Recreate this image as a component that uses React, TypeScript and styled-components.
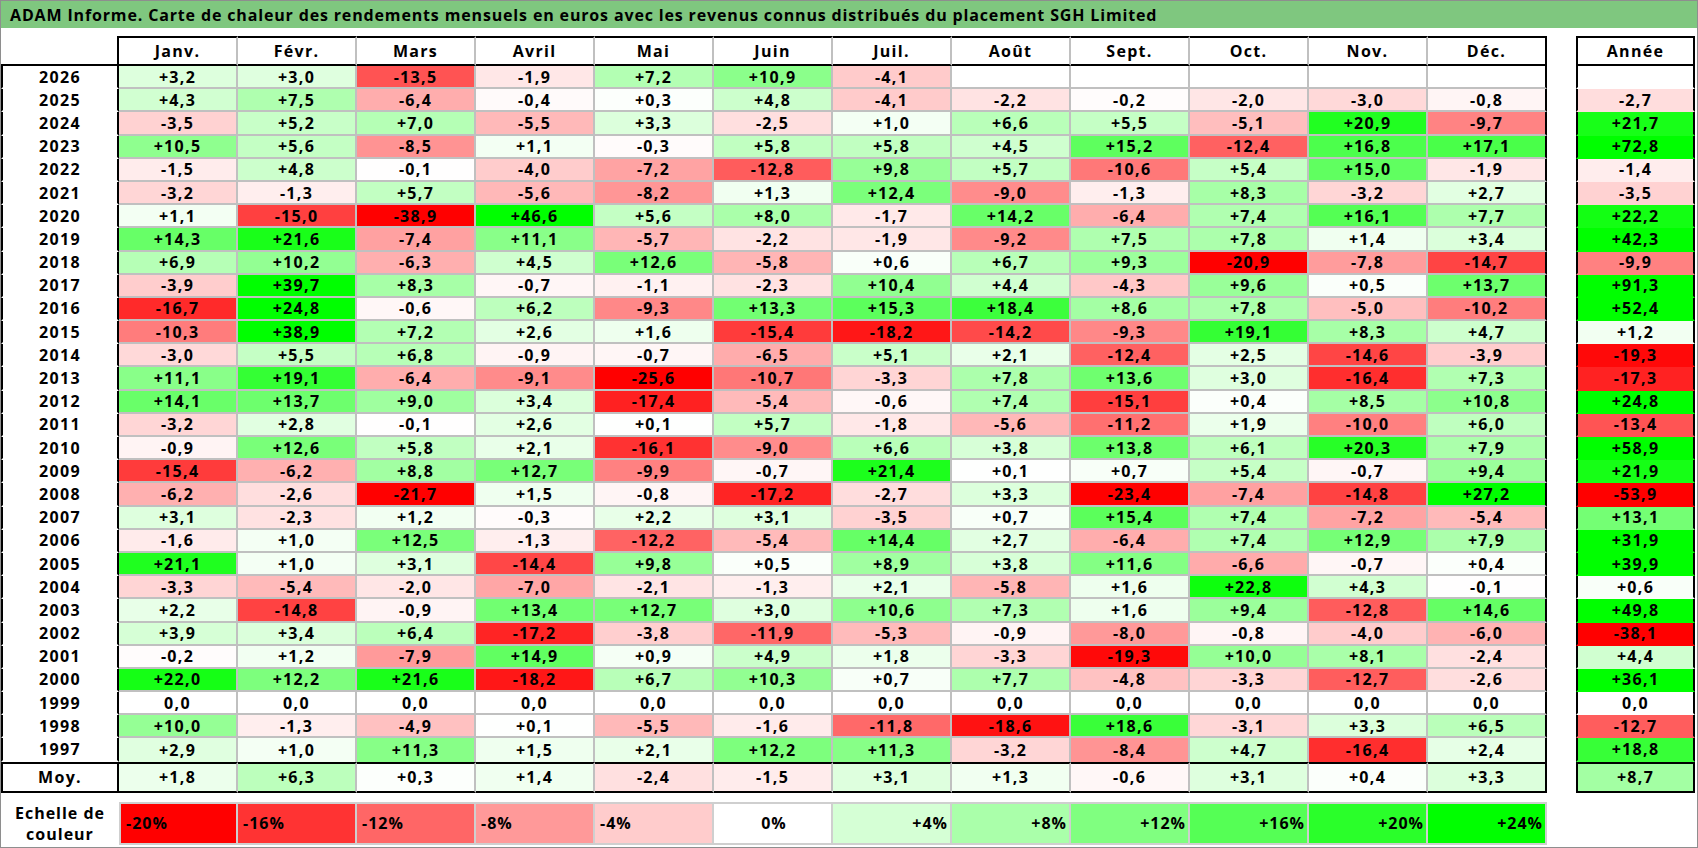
import styled, { createGlobalStyle } from 'styled-components';

const GlobalStyle = createGlobalStyle`
  html, body {
    margin: 0;
    padding: 0;
    background: #fff;
  }
  body {
    font-family: 'Open Sans', 'Liberation Sans', sans-serif;
    color: #000;
  }
`;

const GRID_GREY = '#c0c0c0';

const MONTHS = ['Janv.', 'Févr.', 'Mars', 'Avril', 'Mai', 'Juin', 'Juil.', 'Août', 'Sept.', 'Oct.', 'Nov.', 'Déc.'];

// year, 12 months, year total ('_' = no value yet)
const RAW: [string, string][] = [
  ['2026', '3.2 3.0 -13.5 -1.9 7.2 10.9 -4.1 _ _ _ _ _ _'],
  ['2025', '4.3 7.5 -6.4 -0.4 0.3 4.8 -4.1 -2.2 -0.2 -2.0 -3.0 -0.8 -2.7'],
  ['2024', '-3.5 5.2 7.0 -5.5 3.3 -2.5 1.0 6.6 5.5 -5.1 20.9 -9.7 21.7'],
  ['2023', '10.5 5.6 -8.5 1.1 -0.3 5.8 5.8 4.5 15.2 -12.4 16.8 17.1 72.8'],
  ['2022', '-1.5 4.8 -0.1 -4.0 -7.2 -12.8 9.8 5.7 -10.6 5.4 15.0 -1.9 -1.4'],
  ['2021', '-3.2 -1.3 5.7 -5.6 -8.2 1.3 12.4 -9.0 -1.3 8.3 -3.2 2.7 -3.5'],
  ['2020', '1.1 -15.0 -38.9 46.6 5.6 8.0 -1.7 14.2 -6.4 7.4 16.1 7.7 22.2'],
  ['2019', '14.3 21.6 -7.4 11.1 -5.7 -2.2 -1.9 -9.2 7.5 7.8 1.4 3.4 42.3'],
  ['2018', '6.9 10.2 -6.3 4.5 12.6 -5.8 0.6 6.7 9.3 -20.9 -7.8 -14.7 -9.9'],
  ['2017', '-3.9 39.7 8.3 -0.7 -1.1 -2.3 10.4 4.4 -4.3 9.6 0.5 13.7 91.3'],
  ['2016', '-16.7 24.8 -0.6 6.2 -9.3 13.3 15.3 18.4 8.6 7.8 -5.0 -10.2 52.4'],
  ['2015', '-10.3 38.9 7.2 2.6 1.6 -15.4 -18.2 -14.2 -9.3 19.1 8.3 4.7 1.2'],
  ['2014', '-3.0 5.5 6.8 -0.9 -0.7 -6.5 5.1 2.1 -12.4 2.5 -14.6 -3.9 -19.3'],
  ['2013', '11.1 19.1 -6.4 -9.1 -25.6 -10.7 -3.3 7.8 13.6 3.0 -16.4 7.3 -17.3'],
  ['2012', '14.1 13.7 9.0 3.4 -17.4 -5.4 -0.6 7.4 -15.1 0.4 8.5 10.8 24.8'],
  ['2011', '-3.2 2.8 -0.1 2.6 0.1 5.7 -1.8 -5.6 -11.2 1.9 -10.0 6.0 -13.4'],
  ['2010', '-0.9 12.6 5.8 2.1 -16.1 -9.0 6.6 3.8 13.8 6.1 20.3 7.9 58.9'],
  ['2009', '-15.4 -6.2 8.8 12.7 -9.9 -0.7 21.4 0.1 0.7 5.4 -0.7 9.4 21.9'],
  ['2008', '-6.2 -2.6 -21.7 1.5 -0.8 -17.2 -2.7 3.3 -23.4 -7.4 -14.8 27.2 -53.9'],
  ['2007', '3.1 -2.3 1.2 -0.3 2.2 3.1 -3.5 0.7 15.4 7.4 -7.2 -5.4 13.1'],
  ['2006', '-1.6 1.0 12.5 -1.3 -12.2 -5.4 14.4 2.7 -6.4 7.4 12.9 7.9 31.9'],
  ['2005', '21.1 1.0 3.1 -14.4 9.8 0.5 8.9 3.8 11.6 -6.6 -0.7 0.4 39.9'],
  ['2004', '-3.3 -5.4 -2.0 -7.0 -2.1 -1.3 2.1 -5.8 1.6 22.8 4.3 -0.1 0.6'],
  ['2003', '2.2 -14.8 -0.9 13.4 12.7 3.0 10.6 7.3 1.6 9.4 -12.8 14.6 49.8'],
  ['2002', '3.9 3.4 6.4 -17.2 -3.8 -11.9 -5.3 -0.9 -8.0 -0.8 -4.0 -6.0 -38.1'],
  ['2001', '-0.2 1.2 -7.9 14.9 0.9 4.9 1.8 -3.3 -19.3 10.0 8.1 -2.4 4.4'],
  ['2000', '22.0 12.2 21.6 -18.2 6.7 10.3 0.7 7.7 -4.8 -3.3 -12.7 -2.6 36.1'],
  ['1999', '0.0 0.0 0.0 0.0 0.0 0.0 0.0 0.0 0.0 0.0 0.0 0.0 0.0'],
  ['1998', '10.0 -1.3 -4.9 0.1 -5.5 -1.6 -11.8 -18.6 18.6 -3.1 3.3 6.5 -12.7'],
  ['1997', '2.9 1.0 11.3 1.5 2.1 12.2 11.3 -3.2 -8.4 4.7 -16.4 2.4 18.8'],
];

const AVERAGE = '1.8 6.3 0.3 1.4 -2.4 -1.5 3.1 1.3 -0.6 3.1 0.4 3.3 8.7';

type Value = number | null;

const parse = (s: string): Value[] => s.split(' ').map((x) => (x === '_' ? null : parseFloat(x)));

const ROWS = RAW.map(([year, s]) => ({ year, values: parse(s) }));
const AVG = parse(AVERAGE);

const SCALE = [-20, -16, -12, -8, -4, 0, 4, 8, 12, 16, 20, 24];

// red below zero (full at -20), green above (full at +24)
function heat(v: Value): string {
  if (v === null) return '#ffffff';
  if (v < 0) {
    const c = Math.round(255 * (1 - Math.min(1, -v / 20)));
    return `rgb(255, ${c}, ${c})`;
  }
  const c = Math.round(255 * (1 - Math.min(1, v / 24)));
  return `rgb(${c}, 255, ${c})`;
}

function fmt(v: Value): string {
  if (v === null) return '';
  const s = Math.abs(v).toFixed(1).replace('.', ',');
  if (v > 0) return '+' + s;
  if (v < 0) return '-' + s;
  return s;
}

const Frame = styled.div`
  width: 1698px;
  height: 848px;
  box-sizing: border-box;
  border: 1px solid #8e8e8e;
  background: #fff;
  overflow: hidden;
`;

const TitleBar = styled.div`
  height: 27px;
  background: #7fc77f;
  padding-left: 9px;
  display: flex;
  align-items: center;
  font-size: 16px;
  font-weight: 700;
  letter-spacing: 0.85px;
  white-space: nowrap;
`;

const Content = styled.div`
  padding-top: 8px;
`;

const Tables = styled.div`
  display: flex;
  align-items: flex-start;
  gap: 29px;
`;

const MonthGrid = styled.div`
  display: grid;
  grid-template-columns: 118px repeat(12, 119px);
  grid-template-rows: 30px repeat(30, 23.2px) 31px;
`;

const TotalGrid = styled.div`
  display: grid;
  grid-template-columns: 119px;
  grid-template-rows: 30px repeat(30, 23.2px) 31px;
`;

const Cell = styled.div`
  box-sizing: border-box;
  display: flex;
  align-items: center;
  justify-content: center;
  font-size: 16px;
  font-weight: 700;
  letter-spacing: 1.3px;
  white-space: nowrap;
`;

const Corner = styled(Cell)`
  border-right: 2px solid #000;
  border-bottom: 2px solid #000;
`;

const MonthHead = styled(Cell)<{ $last?: boolean }>`
  border-top: 2px solid #000;
  border-bottom: 2px solid #000;
  border-right: 2px solid ${(p) => (p.$last ? '#000' : GRID_GREY)};
`;

const RowLabel = styled(Cell)<{ $foot?: boolean }>`
  border-left: 2px solid #000;
  border-right: 2px solid #000;
  border-bottom: 2px solid ${(p) => (p.$foot ? '#000' : 'transparent')};
  border-top: ${(p) => (p.$foot ? '2px solid #000' : '0')};
`;

const ValueCell = styled(Cell)<{ $last?: boolean; $foot?: boolean; $end?: boolean }>`
  border-right: 2px solid ${(p) => (p.$last ? '#000' : GRID_GREY)};
  border-top: ${(p) => (p.$foot ? '2px solid #000' : '0')};
  border-bottom: ${(p) => (p.$foot ? '2px solid #000' : p.$end ? '0' : `2px solid ${GRID_GREY}`)};
`;

const TotalHead = styled(Cell)`
  border: 2px solid #000;
`;

const TotalCell = styled(Cell)<{ $foot?: boolean }>`
  border-left: 2px solid #000;
  border-right: 2px solid #000;
  border-top: ${(p) => (p.$foot ? '2px solid #000' : '0')};
  border-bottom: 2px solid ${(p) => (p.$foot ? '#000' : 'transparent')};
`;

const Legend = styled.div`
  display: flex;
  margin-top: 9px;
  height: 43px;
`;

const LegendLabel = styled(Cell)`
  width: 118px;
  flex-direction: column;
  line-height: 21px;
  letter-spacing: 1px;
  padding-top: 2px;
`;

const Swatch = styled(Cell)<{ $align: 'left' | 'center' | 'right'; $first?: boolean }>`
  width: 119px;
  border-top: 2px solid #cfcfcf;
  border-bottom: 2px solid #cfcfcf;
  border-right: 2px solid #cfcfcf;
  border-left: ${(p) => (p.$first ? '2px solid #cfcfcf' : '0')};
  justify-content: ${(p) => (p.$align === 'left' ? 'flex-start' : p.$align === 'right' ? 'flex-end' : 'center')};
  padding: 0 2px 0 5px;
  letter-spacing: 1px;
`;

export default function App() {
  return (
    <>
      <GlobalStyle />
      <Frame>
        <TitleBar>
          ADAM Informe. Carte de chaleur des rendements mensuels en euros avec les revenus connus distribués du placement SGH Limited
        </TitleBar>
        <Content>
          <Tables>
            <MonthGrid>
              <Corner />
              {MONTHS.map((m, i) => (
                <MonthHead key={m} $last={i === 11}>
                  {m}
                </MonthHead>
              ))}
              {ROWS.map((row, r) => [
                <RowLabel key={row.year}>{row.year}</RowLabel>,
                ...row.values.slice(0, 12).map((v, i) => (
                  <ValueCell
                    key={row.year + '-' + i}
                    $last={i === 11}
                    $end={r === ROWS.length - 1}
                    style={{ background: heat(v) }}
                  >
                    {fmt(v)}
                  </ValueCell>
                )),
              ])}
              <RowLabel $foot>Moy.</RowLabel>
              {AVG.slice(0, 12).map((v, i) => (
                <ValueCell key={'avg-' + i} $last={i === 11} $foot style={{ background: heat(v) }}>
                  {fmt(v)}
                </ValueCell>
              ))}
            </MonthGrid>

            <TotalGrid>
              <TotalHead>Année</TotalHead>
              {ROWS.map((row) => (
                <TotalCell key={'t-' + row.year} style={{ background: heat(row.values[12]) }}>
                  {fmt(row.values[12])}
                </TotalCell>
              ))}
              <TotalCell $foot style={{ background: heat(AVG[12]) }}>
                {fmt(AVG[12])}
              </TotalCell>
            </TotalGrid>
          </Tables>

          <Legend>
            <LegendLabel>
              <span>Echelle de</span>
              <span>couleur</span>
            </LegendLabel>
            {SCALE.map((s, i) => (
              <Swatch
                key={s}
                $first={i === 0}
                $align={s < 0 ? 'left' : s > 0 ? 'right' : 'center'}
                style={{ background: heat(s) }}
              >
                {s > 0 ? `+${s}%` : `${s}%`}
              </Swatch>
            ))}
          </Legend>
        </Content>
      </Frame>
    </>
  );
}
